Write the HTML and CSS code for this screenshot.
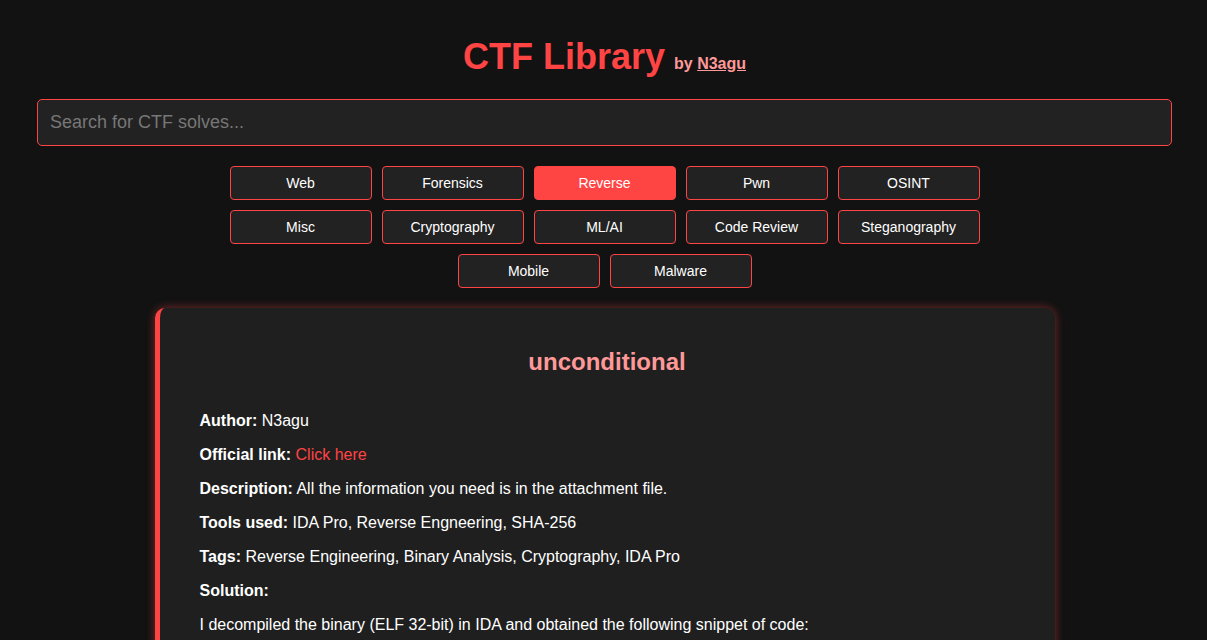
FILE: index.html
```html
<!DOCTYPE html>
<html lang="en">
<head>
<meta charset="utf-8">
<title>CTF Library</title>
<link rel="stylesheet" href="styles.css">
</head>
<body>
<div class="page">
  <header class="header">
    <h1 class="title">CTF Library <span class="byline">by <a href="#" class="author-link">N3agu</a></span></h1>
  </header>
  <input class="search" type="text" placeholder="Search for CTF solves...">
  <nav class="filters">
    <button class="filter">Web</button>
    <button class="filter">Forensics</button>
    <button class="filter active">Reverse</button>
    <button class="filter">Pwn</button>
    <button class="filter">OSINT</button>
    <button class="filter">Misc</button>
    <button class="filter">Cryptography</button>
    <button class="filter">ML/AI</button>
    <button class="filter">Code Review</button>
    <button class="filter">Steganography</button>
    <button class="filter">Mobile</button>
    <button class="filter">Malware</button>
  </nav>
  <article class="card">
    <h2 class="card-title">unconditional</h2>
    <p><strong>Author:</strong> N3agu</p>
    <p><strong>Official link:</strong> <a href="#" class="link">Click here</a></p>
    <p><strong>Description:</strong> All the information you need is in the attachment file.</p>
    <p><strong>Tools used:</strong> IDA Pro, Reverse Engneering, SHA-256</p>
    <p><strong>Tags:</strong> Reverse Engineering, Binary Analysis, Cryptography, IDA Pro</p>
    <p><strong>Solution:</strong></p>
    <p>I decompiled the binary (ELF 32-bit) in IDA and obtained the following snippet of code:</p>
  </article>
</div>
</body>
</html>
```

FILE: styles.css
```css
html, body {
  margin: 0;
  padding: 0;
  background: #121212;
  color: #ffffff;
  font-family: "Liberation Sans", Arial, sans-serif;
}

.page {
  padding: 36px 35px 0 37px;
  display: flex;
  flex-direction: column;
  align-items: center;
}

.header {
  display: flex;
  justify-content: center;
}

.title {
  margin: 0;
  font-size: 36px;
  font-weight: bold;
  color: #ff4444;
  line-height: 42px;
}

.byline {
  font-size: 16px;
  color: #ff9999;
  margin-left: -1px;
}

.author-link {
  color: #ff9999;
  text-decoration: underline;
}

.search {
  box-sizing: border-box;
  width: 100%;
  height: 47px;
  margin-top: 14px;
  padding: 12px;
  background: #222222;
  border: 1px solid #ff4444;
  border-radius: 5px;
  color: #ffffff;
  font-family: "Liberation Sans", Arial, sans-serif;
  font-size: 18px;
  outline: none;
}

.search::placeholder {
  color: #777777;
}

.filters {
  display: flex;
  flex-wrap: wrap;
  justify-content: center;
  gap: 10px;
  width: 750px;
  margin-top: 20px;
}

.filter {
  box-sizing: border-box;
  width: 142px;
  height: 34px;
  background: #222222;
  border: 1px solid #ff4444;
  border-radius: 4px;
  color: #ffffff;
  font-family: "Liberation Sans", Arial, sans-serif;
  font-size: 14px;
  cursor: pointer;
}

.filter.active {
  background: #ff4444;
}

.card {
  box-sizing: border-box;
  width: 900px;
  margin-top: 20px;
  padding: 20px 40px;
  background: #1f1f1f;
  border-left: 5px solid #ff4444;
  border-radius: 10px;
  box-shadow: 0 0 10px rgba(255, 68, 68, 0.45);
}

.card-title {
  margin: 20px 0 36px;
  text-align: center;
  font-size: 24px;
  color: #ff9999;
}

.card p {
  margin: 0 0 16px;
  font-size: 16px;
  line-height: 18px;
  color: #ffffff;
}

.link {
  color: #ff4444;
  text-decoration: none;
}
```
